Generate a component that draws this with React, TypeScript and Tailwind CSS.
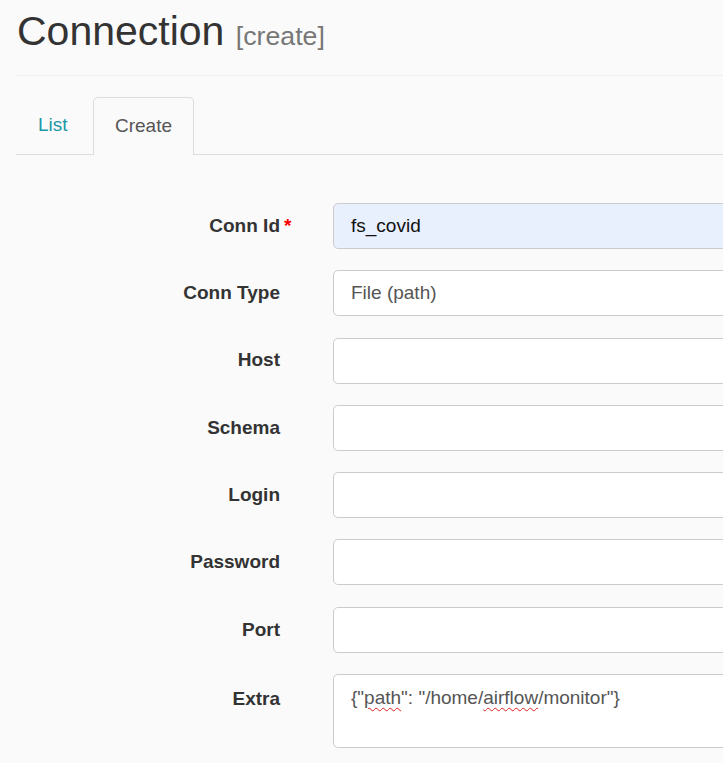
import React from 'react';

const fields: { label: string; value?: string; required?: boolean; autofill?: boolean }[] = [
  { label: 'Conn Id', value: 'fs_covid', required: true, autofill: true },
  { label: 'Conn Type', value: 'File (path)' },
  { label: 'Host' },
  { label: 'Schema' },
  { label: 'Login' },
  { label: 'Password' },
  { label: 'Port' },
];

const Squiggle: React.FC<{ children: React.ReactNode }> = ({ children }) => (
  <span className="underline decoration-wavy decoration-[#e02020] decoration-1 underline-offset-[3px]">{children}</span>
);

export default function App() {
  return (
    <div className="min-h-screen bg-[#fafafa] overflow-hidden font-['Liberation_Sans',Arial,sans-serif] text-[19px] text-[#333]">
      <div className="pl-4">
        <h2 className="pt-[9px] pl-[1px] text-[41px] leading-[45px] text-[#333] whitespace-nowrap">
          Connection <span className="text-[26.7px] text-[#777]">[create]</span>
        </h2>
        <div className="mt-[16px] h-px bg-[#eeeeee]" />

        <div className="mt-[21px] flex items-end border-b border-[#dddddd] h-[58px]">
          <div className="w-[77px] h-[57px] flex items-center pl-[22px] text-[#1b98a6]">List</div>
          <div className="w-[101px] h-[58px] -mb-px flex items-center justify-center border border-b-0 border-[#dddddd] rounded-t-[5px] bg-[#fafafa] text-[#555]">
            Create
          </div>
        </div>

        <div className="mt-[48px] flex flex-col gap-[21.3px]">
          {fields.map((f) => (
            <div key={f.label} className="flex items-center">
              <div className="w-[317px] shrink-0 pr-[53px] flex justify-end">
                <label className="font-bold text-[#333] relative whitespace-nowrap">
                  {f.label}
                  {f.required && <span className="absolute left-full ml-[4px] top-0 text-[#ff0000]">*</span>}
                </label>
              </div>
              <div
                className={`w-[420px] shrink-0 h-[46px] border border-[#cccccc] rounded-[5px] flex items-center pl-[17px] whitespace-nowrap ${
                  f.autofill ? 'bg-[#e8f0fe] text-[#111]' : 'bg-white text-[#555]'
                }`}
              >
                {f.value}
              </div>
            </div>
          ))}
          <div className="flex items-start">
            <div className="w-[317px] shrink-0 pr-[53px] flex justify-end pt-[11px]">
              <label className="font-bold text-[#333]">Extra</label>
            </div>
            <div className="w-[420px] shrink-0 h-[74px] border border-[#cccccc] rounded-[5px] bg-white pl-[17px] pt-[9px] text-[#555] whitespace-nowrap">
              {'{"'}
              <Squiggle>path</Squiggle>
              {'": "/home/'}
              <Squiggle>airflow</Squiggle>
              {'/monitor"}'}
            </div>
          </div>
        </div>
      </div>
    </div>
  );
}
